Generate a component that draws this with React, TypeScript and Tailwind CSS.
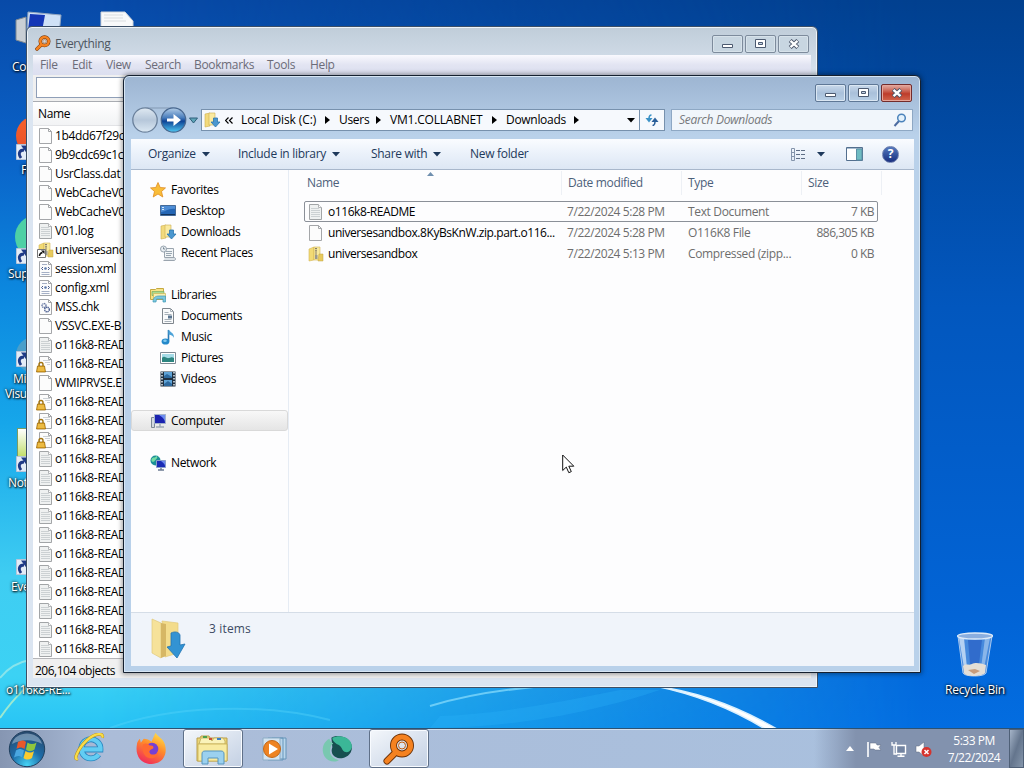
import type { ReactNode } from "react";
import clsx from "clsx";

type IconKind =
  | "blank"
  | "text"
  | "locked"
  | "zip"
  | "ziplink"
  | "xml"
  | "gear"
  | "star"
  | "desktop"
  | "downloads"
  | "recent"
  | "libraries"
  | "documents"
  | "music"
  | "pictures"
  | "videos"
  | "computer"
  | "network";

interface NavItem {
  label: string;
  icon: IconKind;
  child?: boolean;
  selected?: boolean;
}

const navGroups: NavItem[][] = [
  [
    { label: "Favorites", icon: "star" },
    { label: "Desktop", icon: "desktop", child: true },
    { label: "Downloads", icon: "downloads", child: true },
    { label: "Recent Places", icon: "recent", child: true },
  ],
  [
    { label: "Libraries", icon: "libraries" },
    { label: "Documents", icon: "documents", child: true },
    { label: "Music", icon: "music", child: true },
    { label: "Pictures", icon: "pictures", child: true },
    { label: "Videos", icon: "videos", child: true },
  ],
  [{ label: "Computer", icon: "computer", selected: true }],
  [{ label: "Network", icon: "network" }],
];

const files: { name: string; icon: IconKind; date: string; type: string; size: string }[] = [
  { name: "o116k8-README", icon: "text", date: "7/22/2024 5:28 PM", type: "Text Document", size: "7 KB" },
  {
    name: "universesandbox.8KyBsKnW.zip.part.o116...",
    icon: "blank",
    date: "7/22/2024 5:28 PM",
    type: "O116K8 File",
    size: "886,305 KB",
  },
  { name: "universesandbox", icon: "zip", date: "7/22/2024 5:13 PM", type: "Compressed (zipp...", size: "0 KB" },
];

const readme = "o116k8-READ";

const results: { name: string; icon: IconKind }[] = [
  { name: "1b4dd67f29c", icon: "blank" },
  { name: "9b9cdc69c1c", icon: "blank" },
  { name: "UsrClass.dat", icon: "blank" },
  { name: "WebCacheV0", icon: "blank" },
  { name: "WebCacheV0", icon: "blank" },
  { name: "V01.log", icon: "text" },
  { name: "universesand", icon: "ziplink" },
  { name: "session.xml", icon: "xml" },
  { name: "config.xml", icon: "xml" },
  { name: "MSS.chk", icon: "gear" },
  { name: "VSSVC.EXE-B", icon: "blank" },
  { name: readme, icon: "text" },
  { name: readme, icon: "locked" },
  { name: "WMIPRVSE.E", icon: "blank" },
  { name: readme, icon: "locked" },
  { name: readme, icon: "locked" },
  { name: readme, icon: "locked" },
  ...Array.from({ length: 11 }, () => ({ name: readme, icon: "text" as IconKind })),
];

function Page() {
  return (
    <path d="M1.5.5h9l3 3v12h-12z M10.5.5v3h3" fill="#fcfcfc" stroke="#a4a6a9" strokeWidth="1" strokeLinejoin="round" />
  );
}

function Zipper() {
  return (
    <>
      <path d="M1 3l5-2v13l-5 1z" fill="#f2da74" stroke="#d5b755" strokeWidth=".6" />
      <path d="M6 1h6v13H6z" fill="#f8ea9f" stroke="#d5b755" strokeWidth=".6" />
      <path d="M11 8h4v7h-5z" fill="#e8ca5d" stroke="#c3a445" strokeWidth=".5" />
      <path d="M8 2v10" stroke="#857c68" strokeWidth="2" strokeDasharray="1.2 1" />
      <path d="M7 9h2.500v4H7z" fill="#9a9890" />
    </>
  );
}

function FileIcon({ kind, className }: { kind: IconKind; className?: string }) {
  return (
    <svg viewBox="0 0 16 16" className={clsx("h-4 w-4 shrink-0 overflow-visible", className)} fill="none">
      {kind === "blank" && <Page />}
      {kind === "text" && (
        <>
          <path d="M1.500.500h9l3 3v12h-12z" fill="#eff1f1" stroke="#a2a5a7" />
          <path d="M3 4.500h8M3 6.500h9M3 8.500h9M3 10.500h9M3 12.500h9" stroke="#ccd1d3" />
          <path d="M10.500.500v3h3" fill="#fff" stroke="#b2b5b7" />
        </>
      )}
      {kind === "locked" && (
        <>
          <Page />
          <path d="M5 4.500h7M7 6.500h5M9 8.500h3" stroke="#ccd1d5" />
          <path d="M1 10.500V8.500a2 2 0 0 1 4 0v2" stroke="#a37510" strokeWidth="1.400" />
          <path d="M-.500 10h7l1 6h-9z" fill="#e5a823" stroke="#9b6a0d" strokeWidth=".8" />
          <path d="M0 12h6M-.500 14h7" stroke="#f7d874" strokeWidth=".8" />
        </>
      )}
      {kind === "zip" && <Zipper />}
      {kind === "ziplink" && (
        <>
          <Zipper />
          <path d="M-.5 7.500h8v8h-8z" fill="#fff" stroke="#777" />
          <path d="M1.500 14c0-2 .5-3 3-3.500" stroke="#111" strokeWidth="1.500" />
          <path d="M3 8.500h3.500V12z" fill="#111" />
        </>
      )}
      {kind === "xml" && (
        <>
          <Page />
          <path d="M4 3.500h5M3.500 11.500h8M3.500 13.500h8" stroke="#a5b0c6" />
          <path d="M5 6L3.500 7.500 5 9M10 6l1.500 1.500L10 9" stroke="#46598a" />
          <circle cx="7.500" cy="7.500" r="1.300" fill="#5b78a8" />
        </>
      )}
      {kind === "gear" && (
        <>
          <Page />
          <circle cx="6" cy="6.500" r="2" stroke="#6d7da5" strokeWidth="1.400" strokeDasharray="1.200 .5" />
          <circle cx="9" cy="10.500" r="2.300" stroke="#4b5e90" strokeWidth="1.500" strokeDasharray="1.200 .5" />
        </>
      )}
      {kind === "star" && (
        <path
          d="M8 .5l2.200 5 5.300.4-4 3.600 1.300 5.500L8 12l-4.800 3 1.300-5.500-4-3.600 5.300-.4z"
          fill="#f9bd39"
          stroke="#df8b21"
          strokeWidth=".8"
        />
      )}
      {kind === "desktop" && (
        <>
          <path d="M.5 2.500h15v10H.5z" fill="#2466b5" stroke="#456b99" />
          <path d="M1 3h14v3C9 5 5 9 1 9z" fill="#4e8dd6" />
          <path d="M2 4.500h2M2 6.500h2" stroke="#d5e7f8" />
          <path d="M1 11.500h14" stroke="#12345e" />
        </>
      )}
      {kind === "downloads" && (
        <>
          <path d="M1 2l5-1v13l-5 1z" fill="#f2da7d" stroke="#cfae50" strokeWidth=".6" />
          <path d="M5 1h6v12H5z" fill="#faeaa0" stroke="#cfae50" strokeWidth=".6" />
          <path d="M9.500 6h4v4h2.500L11.500 15 7 10h2.500z" fill="#4a97d0" stroke="#2c76ad" strokeWidth=".8" />
        </>
      )}
      {kind === "recent" && (
        <>
          <path d="M4.500 3.500h9v9h-9z" fill="#f2f5f7" stroke="#9aa4ae" />
          <path d="M3.500 15.500h10.500c2 0 2-3 0-3H5" fill="#dde3e8" stroke="#9aa4ae" />
          <path d="M6 6.500h6M6 8.500h6M6 10.500h5" stroke="#99a6b1" />
          <circle cx="3.500" cy="4" r="3" fill="#e9eef2" stroke="#98a4af" />
          <path d="M3.500 2.300V4h1.500" stroke="#60717f" strokeWidth=".8" />
        </>
      )}
      {kind === "libraries" && (
        <>
          <path d="M.5 2.500h5l1-1h7v11H.5z" fill="#f6e389" stroke="#c6a940" />
          <path d="M2 4.500h12v4H2z" fill="#a9d98f" stroke="#7aad62" strokeWidth=".7" />
          <path d="M3.500 6.500h12v5h-12z" fill="#f8eeb0" stroke="#cfb454" strokeWidth=".7" />
          <path d="M3 15c0-4 2-6 6-6h6.500v6H13v-3H6.500l-.5 3z" fill="#7cc7dc" stroke="#4099b8" strokeWidth=".7" />
        </>
      )}
      {kind === "documents" && (
        <>
          <path d="M2.500.5h8l3 3v12h-11z" fill="#fafbfc" stroke="#7f868d" />
          <path d="M10.500.5v3h3M4.500 4.500h4M4.500 6.500h7M4.500 11.500h7M4.500 13.500h7" stroke="#a8b1b9" />
          <path d="M8 7.500h4v3H8z" fill="#5a7590" />
        </>
      )}
      {kind === "music" && (
        <>
          <path d="M8.500 1v11" stroke="#2a79b5" strokeWidth="1.600" />
          <path d="M8.500 0c0 3 6 3 5.500 9-.5-2-2.500-3-5.500-3.500z" fill="#4da3d8" />
          <ellipse cx="5.500" cy="12.500" rx="3.900" ry="3.100" fill="#2489ca" />
          <ellipse cx="5" cy="11.800" rx="1.800" ry="1.200" fill="#80c8ee" />
        </>
      )}
      {kind === "pictures" && (
        <>
          <path d="M.5 2.500h15v11H.5z" fill="#fff" stroke="#7e8a94" />
          <path d="M2 4h12v8H2z" fill="#a5dbe7" />
          <path d="M2 8c3-3 4 1 7 0s3-1 5 0v4H2z" fill="#2d8580" />
        </>
      )}
      {kind === "videos" && (
        <>
          <path d="M.5.5h15v15H.5z" fill="#1f2f3f" />
          <path d="M4 1h8v6H4zM4 9h8v6H4z" fill="#5fa3d6" />
          <path d="M4 5l3-2 5 3v1H4zM4 13l4-3 4 3v2H4z" fill="#2d699e" />
          <path d="M2 1v14M14 1v14" stroke="#e5edf2" strokeWidth="1.500" strokeDasharray="1.500 1.500" />
        </>
      )}
      {kind === "computer" && (
        <>
          <path d="M1.500 4.500h3v10h-3z" fill="#d4dae1" stroke="#7d8995" />
          <path d="M4.500 1.500h11v9h-11z" fill="#1b23b0" stroke="#a3b2cb" />
          <path d="M9 2h6v8c0-4-3-6-6-8z" fill="#6d8df0" />
          <path d="M10 11v2.500M6 14h8" stroke="#9da9b7" strokeWidth="1.500" />
        </>
      )}
      {kind === "network" && (
        <>
          <circle cx="5.500" cy="5.500" r="5" fill="#1b8f96" />
          <path d="M1.500 4c2-3 3 0 5-3 2 1 0 3-1 4s-2 3-4 1z" fill="#74dba4" />
          <path d="M6.500 5.500h9v7h-9z" fill="#1a2bb5" stroke="#8b9fca" />
          <path d="M11 6h4v5c0-2-2-3-4-5z" fill="#6b88ee" />
          <path d="M11 13v1.500M8 15h6" stroke="#6c7b93" strokeWidth="1.400" />
        </>
      )}
    </svg>
  );
}

function Magnifier({ className }: { className?: string }) {
  return (
    <svg viewBox="0 0 32 32" className={className} fill="none">
      <path d="M12 20L4 28" stroke="#6b3208" strokeWidth="7" strokeLinecap="round" />
      <circle cx="19" cy="12.500" r="8.500" stroke="#6b3208" strokeWidth="7" />
      <path d="M12 20L4 28" stroke="#f58220" strokeWidth="5.200" strokeLinecap="round" />
      <circle cx="19" cy="12.500" r="8.500" stroke="#f58220" strokeWidth="5.200" />
      <circle cx="19" cy="12.500" r="3.500" stroke="#c25e10" strokeWidth="1" />
    </svg>
  );
}

function WindowButtons({ active }: { active?: boolean }) {
  const base = "flex h-[18px] items-center justify-center rounded-[2px] border";
  const plain = active
    ? "border-[#5f7896] bg-linear-to-b from-[#c9d9eb] via-[#a9c0da] to-[#b9d0e6] shadow-[inset_0_0_0_1px_#dbe7f3]"
    : "border-[#7d8b9c] bg-[#c8d6e1] shadow-[inset_0_0_0_1px_#d7e2ea]";
  return (
    <div className="flex gap-0.5">
      <div className={clsx(base, plain, "w-[31px]")}>
        <svg viewBox="0 0 12 10" className="h-2.5 w-3">
          <path d="M.5 5.500h10v3H.5z" fill="#fff" stroke="#4c5a70" />
        </svg>
      </div>
      <div className={clsx(base, plain, "w-[31px]")}>
        <svg viewBox="0 0 12 10" className="h-2.5 w-3">
          <path d="M.5.500h10v8H.5z" fill="#fff" stroke="#4c5a70" />
          <path d="M3.500 3.500h4v2h-4z" fill="#c5d4e6" stroke="#4c5a70" />
        </svg>
      </div>
      <div
        className={clsx(
          base,
          "w-[31px]",
          active
            ? "border-[#722c2c] bg-linear-to-b from-[#dc9a8f] from-10% via-[#bd3b2a] via-55% to-[#d2664e] shadow-[inset_0_0_0_1px_#e5a69b]"
            : plain,
        )}
      >
        <svg viewBox="0 0 12 10" className="h-2.5 w-3">
          <path d="M2.200 1.500l7.600 7M9.800 1.500l-7.600 7" stroke="#4c5568" strokeWidth="4.200" />
          <path d="M2.500 1.800l7 6.400M9.500 1.800l-7 6.400" stroke="#fff" strokeWidth="2.400" />
        </svg>
      </div>
    </div>
  );
}

function EverythingWindow() {
  return (
    <div className="absolute left-[26px] top-[26px] flex h-[662px] w-[792px] flex-col rounded-t-[6px] border border-[#3c4f66] bg-[#d9e4f0] bg-linear-to-b from-[#c0cdd9] to-[#dbe5f1] to-8% px-[6px] pb-[9px] shadow-[inset_0_0_0_1px_#eef4f9]">
      <div className="flex h-[28px] shrink-0 items-start pl-[2px] pr-[2px] pt-2">
        <Magnifier className="h-4 w-4" />
        <span className="ml-1 flex-1 leading-[18px] text-[#4d5660]">Everything</span>
        <WindowButtons />
      </div>
      <div className="flex h-5 shrink-0 items-center bg-linear-to-b from-[#f9f9fe] via-[#e2e4f2] to-[#dcdff0] pl-[7px] text-[#6c6c78]">
        <span className="w-8">File</span>
        <span className="w-[34px]">Edit</span>
        <span className="w-[39px]">View</span>
        <span className="w-[49px]">Search</span>
        <span className="w-[73px]">Bookmarks</span>
        <span className="w-[43px]">Tools</span>
        <span>Help</span>
      </div>
      <div className="flex min-h-0 flex-1 flex-col bg-[#f0f0f0]">
        <div className="h-[26px] shrink-0 px-[3px] pt-[2px]">
          <div className="h-[21px] border border-[#8f9fb8] bg-white" />
        </div>
        <div className="flex h-[25px] shrink-0 items-center border-b border-t border-b-[#e2e3e6] border-t-[#a9acb2] bg-linear-to-b from-white to-[#f2f3f5] pl-[5px] text-black">
          Name
        </div>
        <div className="flex-1 bg-white">
          {results.map((row, i) => (
            <div key={i} className="flex h-[19px] items-center whitespace-nowrap pl-[5px] text-black">
              <FileIcon kind={row.icon} />
              <span className="ml-px">{row.name}</span>
            </div>
          ))}
        </div>
        <div className="h-[21px] shrink-0 border-t border-[#b5b5b8] pl-0.5 pt-[3px] leading-[18px] tracking-[-0.5px] text-black">
          206,104 objects
        </div>
      </div>
    </div>
  );
}

function Chevron({ className }: { className?: string }) {
  return (
    <svg viewBox="0 0 8 5" className={clsx("h-[5px] w-2 shrink-0", className)}>
      <path d="M0 0h8L4 4.500z" fill="currentColor" />
    </svg>
  );
}

function Crumb({ label, className }: { label: string; className?: string }) {
  return (
    <span className={clsx("flex shrink-0 items-center justify-between whitespace-nowrap", className)}>
      {label}
      <svg viewBox="0 0 5 8" className="h-2 w-[5px]">
        <path d="M0 0l5 4-5 4z" fill="#000" />
      </svg>
    </span>
  );
}

function AddressRow() {
  return (
    <div className="flex h-[35px] shrink-0 items-start">
      <svg viewBox="0 0 70 32" className="h-8 w-[70px] shrink-0" fill="none">
        <defs>
          <linearGradient id="fwd" x1="0" y1="0" x2="0" y2="1">
            <stop offset="0" stopColor="#b5cfe8" />
            <stop offset=".4" stopColor="#4a7ebd" />
            <stop offset=".55" stopColor="#0e4496" />
            <stop offset="1" stopColor="#4fc9f3" />
          </linearGradient>
          <linearGradient id="back" x1="0" y1="0" x2="0" y2="1">
            <stop offset="0" stopColor="#dfe9f2" />
            <stop offset=".5" stopColor="#b6c7da" />
            <stop offset="1" stopColor="#dbe8f3" />
          </linearGradient>
        </defs>
        <path d="M14 4h28" stroke="#8399b3" />
        <circle cx="14" cy="16" r="12.200" fill="url(#back)" stroke="#6b819c" strokeWidth="1.300" />
        <circle cx="42.500" cy="16" r="12.200" fill="url(#fwd)" stroke="#48678f" strokeWidth="1.300" />
        <path d="M36 14.500h6.500v-4.500l7.500 6-7.500 6v-4.500H36z" fill="#fff" />
        <path d="M58.500 14h8l-4 5z" fill="#5ea5b8" stroke="#2e5f7a" />
      </svg>
      <div className="mt-[5px] flex h-[22px] w-[464px] border border-[#7791ad] bg-[#f6f9fd] text-black">
        <div className="flex flex-1 items-center pl-0.5">
          <FileIcon kind="downloads" />
          <svg viewBox="0 0 8 7" className="ml-[5px] h-[7px] w-2" fill="none">
            <path d="M3.500.5l-3 3 3 3M7.500.5l-3 3 3 3" stroke="#000" strokeWidth="1.200" />
          </svg>
          <Crumb label="Local Disk (C:)" className="ml-2 w-[89px] tracking-[-0.1px]" />
          <Crumb label="Users" className="ml-[9px] w-[42px] tracking-[-0.3px]" />
          <Crumb label="VM1.COLLABNET" className="ml-[9px] w-[107px] tracking-[-0.2px]" />
          <Crumb label="Downloads" className="ml-[9px] w-[73px] tracking-[-0.3px]" />
          <Chevron className="ml-auto mr-1" />
        </div>
        <div className="flex w-[25px] items-center justify-center border-l border-[#7791ad]">
          <svg viewBox="0 0 14 12" className="h-3 w-3.5" fill="none">
            <path d="M6.500 1C4.500 1 4 2 4 5" stroke="#3b92c6" strokeWidth="1.600" />
            <path d="M.5 4h7L4 8.500z" fill="#3b92c6" />
            <path d="M7.500 11.500c2 0 2.500-1 2.500-4" stroke="#2a5f9a" strokeWidth="1.600" />
            <path d="M6.500 8h7L10 3.500z" fill="#2a5f9a" />
          </svg>
        </div>
      </div>
      <div className="ml-1.5 mt-[5px] flex h-[22px] w-[242px] items-center justify-between border border-[#8ea8c4] bg-[#f1f6fb] pl-[7px] pr-[5px] italic tracking-[-0.3px] text-[#77797c]">
        Search Downloads
        <svg viewBox="0 0 14 14" className="h-3.5 w-3.5" fill="none">
          <path d="M6 8l-4.500 5" stroke="#4c6ba0" strokeWidth="2" />
          <circle cx="8.500" cy="5" r="3.800" fill="#e3f1fb" stroke="#4b83bb" strokeWidth="1.500" />
        </svg>
      </div>
    </div>
  );
}

function Toolbar() {
  return (
    <div className="flex h-[31px] shrink-0 items-center border-b border-[#a8b7cb] bg-linear-to-b from-[#fafcff] via-[#eaf1fa] to-[#dde7f4] pl-[17px] tracking-[-0.3px] text-[#1e395b]">
      <span className="flex w-[90px] items-center gap-1.5">
        Organize <Chevron />
      </span>
      <span className="flex w-[133px] items-center gap-1.5">
        Include in library <Chevron />
      </span>
      <span className="flex w-[99px] items-center gap-1.5">
        Share with <Chevron />
      </span>
      <span>New folder</span>
      <div className="ml-auto flex items-center pr-[15px]">
        <svg viewBox="0 0 15 13" className="h-[13px] w-[15px]" fill="none">
          <path d="M.5.5h3v12h-3zM.5 4.500h3M.5 8.500h3" stroke="#8494ab" />
          <path d="M5 2.500h10M5 6.500h10M5 10.500h10" stroke="#5e6e86" strokeDasharray="4 1" />
        </svg>
        <Chevron className="ml-[11px]" />
        <svg viewBox="0 0 17 14" className="ml-[21px] h-3.5 w-[17px]" fill="none">
          <path d="M.5.5h16v13H.5z" fill="#fff" stroke="#536f8e" />
          <path d="M1 1.500h15" stroke="#a9bdd1" />
          <path d="M10.500 2h5.500v11h-5.500z" fill="#6fbcc2" stroke="#5b8fa5" />
        </svg>
        <div className="ml-[19px] flex h-[17px] w-[17px] items-center justify-center rounded-full border border-[#6d7fae] bg-linear-to-b from-[#5478bd] to-[#1a2f80] text-[12px] font-bold leading-none text-white">
          ?
        </div>
      </div>
    </div>
  );
}

function NavPane() {
  return (
    <div className="flex w-[158px] shrink-0 flex-col gap-[21px] border-r border-[#e6ecf4] pt-[9px] text-black">
      {navGroups.map((group) => (
        <div key={group[0].label}>
          {group.map((item) => (
            <div
              key={item.label}
              className={clsx(
                "flex h-[21px] items-center border",
                item.child ? "pl-[28px]" : "pl-[18px]",
                item.selected
                  ? "rounded-[3px] border-[#d9d9d9] bg-linear-to-b from-[#f8f8f8] to-[#e5e5e5]"
                  : "border-transparent",
              )}
            >
              <FileIcon kind={item.icon} />
              <span className="ml-[5px]">{item.label}</span>
            </div>
          ))}
        </div>
      ))}
    </div>
  );
}

function FilePane() {
  return (
    <div className="relative flex-1 pl-[15px] pt-px">
      <svg viewBox="0 0 7 4" className="absolute left-[138px] top-0.5 h-1 w-[7px]">
        <path d="M0 4l3.500-4L7 4z" fill="#6f8fae" />
      </svg>
      <div className="flex h-6 text-[#4c607a]">
        <span className="flex w-[258px] items-center border-r border-[#edf0f5] pl-[3px]">Name</span>
        <span className="flex w-[120px] items-center border-r border-[#edf0f5] pl-1.5">Date modified</span>
        <span className="flex w-[120px] items-center border-r border-[#edf0f5] pl-1.5">Type</span>
        <span className="flex w-[80px] items-center border-r border-[#edf0f5] pl-1.5">Size</span>
      </div>
      <div className="mt-1.5 w-[574px]">
        {files.map((file, i) => (
          <div
            key={file.name}
            className={clsx(
              "flex h-[21px] items-center whitespace-nowrap rounded-[2px] border text-[#6d6d6d]",
              i === 0 ? "border-[#8b9098]" : "border-transparent",
            )}
          >
            <FileIcon kind={file.icon} className="ml-[3px]" />
            <span className="ml-1 w-[239px] tracking-[-0.43px] text-black">{file.name}</span>
            <span className="w-[121px] tracking-[-0.42px]">{file.date}</span>
            <span className="w-[120px]">{file.type}</span>
            <span className="flex-1 pr-[3px] text-right tracking-[-0.5px]">{file.size}</span>
          </div>
        ))}
      </div>
    </div>
  );
}

function ExplorerWindow() {
  return (
    <div className="absolute left-[123px] top-[75px] flex h-[598px] w-[798px] flex-col rounded-t-[6px] border border-[#15202f] bg-[#b9d1ea] bg-linear-to-b from-[#9db5d2] to-[#b9d1ea] to-10% pb-[6px] pl-[7px] pr-[6px] shadow-[inset_0_0_0_1px_#d7e6f4,0_0_5px_1px_#0006]">
      <div className="flex h-7 shrink-0 justify-end pr-[2px] pt-2">
        <WindowButtons active />
      </div>
      <AddressRow />
      <div className="flex min-h-0 flex-1 flex-col bg-[#fdfdfe]">
        <Toolbar />
        <div className="flex min-h-0 flex-1">
          <NavPane />
          <FilePane />
        </div>
        <div className="flex h-[54px] shrink-0 border-t border-[#d5dde7] bg-[#f0f4fa] pl-[19px] pt-[5px]">
          <svg viewBox="0 0 36 42" className="h-[42px] w-9" fill="none">
            <path d="M12 3l16 2v30l-13 4z" fill="#f3dc8c" stroke="#e2ca7d" strokeWidth=".7" />
            <path d="M2 1l9 4v35l-9-5z" fill="#f6e29a" stroke="#e0c97c" strokeWidth=".7" />
            <path d="M11 5l5 1v32l-5 2z" fill="#d6b765" />
            <path d="M21 15c4-2 8-1 9 2v10l5-1-8 14-10-11 4-1z" fill="#3393d3" stroke="#2274b2" strokeWidth=".8" />
          </svg>
          <span className="ml-[23px] pt-0.5 tracking-[0.15px] text-[#3c4a63]">3 items</span>
        </div>
      </div>
    </div>
  );
}

function ShortcutArrow({ className }: { className?: string }) {
  return (
    <svg viewBox="0 0 16 16" className={clsx("h-4 w-4", className)} fill="none">
      <path d="M.5.500h15v15H.5z" fill="#e3ecf7" stroke="#b7c5d9" />
      <path d="M5 14C2 10 3 6 8 6" stroke="#1e3a86" strokeWidth="2.800" />
      <path d="M5 1.500h6v8z" fill="#1e3a86" />
    </svg>
  );
}

function DesktopLabel({ children, className }: { children: ReactNode; className?: string }) {
  return (
    <span
      className={clsx(
        "absolute whitespace-nowrap leading-[15px] text-white [text-shadow:1px_1px_2px_#000,0_0_3px_#000]",
        className,
      )}
    >
      {children}
    </span>
  );
}

function DesktopIcons() {
  return (
    <div className="absolute inset-0">
      <svg viewBox="0 0 48 34" className="absolute left-[15px] top-[10px] h-[34px] w-12" fill="none">
        <path d="M1 10l10-3v26l-10-3z" fill="#c9cfd5" stroke="#7f8992" />
        <path d="M13 2l33 3-2 20-32-3z" fill="#cfe1f6" stroke="#91a5bf" />
        <path d="M15 4l15 1-3 16-14-1z" fill="#1437b6" />
      </svg>
      <svg viewBox="0 0 34 18" className="absolute left-[100px] top-[11px] h-[18px] w-[34px]" fill="none">
        <path d="M1 1h24l8 9v8H1z" fill="#f8f9fa" stroke="#cfd5db" />
        <path d="M4 4h19M4 7h19M4 10h22" stroke="#d9dde0" />
      </svg>
      <div className="absolute left-4 top-[116px] h-10 w-10 rounded-full bg-linear-to-b from-[#f5612b] to-[#e8502a]" />
      <div className="absolute left-[15px] top-[215px] h-11 w-11 rounded-full bg-[#4ed0a5]" />
      <div className="absolute left-4 top-[337px] h-9 w-9 rounded-full bg-[#4a9fcb]" />
      <div className="absolute left-[17px] top-[428px] h-9 w-8 border border-[#7b9c62] bg-linear-to-b from-white to-[#b5d52a]" />
      <ShortcutArrow className="absolute left-4 top-[144px]" />
      <ShortcutArrow className="absolute left-4 top-[248px]" />
      <ShortcutArrow className="absolute left-4 top-[351px]" />
      <ShortcutArrow className="absolute left-4 top-[456px]" />
      <ShortcutArrow className="absolute left-4 top-[559px]" />
      <DesktopLabel className="left-3 top-[59px]">Co</DesktopLabel>
      <DesktopLabel className="left-[21px] top-[162px]">F</DesktopLabel>
      <DesktopLabel className="left-2 top-[266px]">Sup</DesktopLabel>
      <DesktopLabel className="left-[13px] top-[371px]">Mi</DesktopLabel>
      <DesktopLabel className="left-[5px] top-[386px]">Visu</DesktopLabel>
      <DesktopLabel className="left-2 top-[475px]">Not</DesktopLabel>
      <DesktopLabel className="left-[11px] top-[579px]">Eve</DesktopLabel>
      <DesktopLabel className="left-1.5 top-[682px]">o116k8-RE...</DesktopLabel>
      <svg viewBox="0 0 38 46" className="absolute left-[956px] top-[632px] h-[46px] w-[38px]" fill="none">
        <path d="M2 4l5 37c1 4 22 4 23 0l6-37z" fill="#5e95de" fillOpacity=".75" stroke="#a9c9f0" />
        <path d="M3 6l5 30h3L8 6z" fill="#cfe2f7" fillOpacity=".8" />
        <path d="M29 6l-4 30h3l6-30z" fill="#b5d2f2" fillOpacity=".6" />
        <path d="M12 8l2 24h9l3-24z" fill="#285fc4" fillOpacity=".7" />
        <path d="M7 34c3-3 6 0 9-2s9-1 14 1l-1 8c-3 4-20 4-21 0z" fill="#e4ded6" />
        <path d="M12 38l7-1 5 2-6 3z" fill="#c79c7c" />
        <ellipse cx="19" cy="4" rx="17.500" ry="3" fill="#8aaedf" stroke="#dbe9f8" strokeWidth="1.300" />
      </svg>
      <DesktopLabel className="left-[945px] top-[682px] tracking-[-0.25px]">Recycle Bin</DesktopLabel>
    </div>
  );
}

function Wallpaper() {
  return (
    <svg viewBox="0 0 1024 768" className="absolute inset-0 h-full w-full" preserveAspectRatio="none" fill="none">
      <defs>
        <linearGradient id="sky" x1="0" y1="0" x2="0" y2="1">
          <stop offset="0" stopColor="#084aa8" />
          <stop offset=".2" stopColor="#0a62c8" />
          <stop offset=".38" stopColor="#0c88df" />
          <stop offset=".55" stopColor="#16a6ea" />
          <stop offset=".75" stopColor="#3fcdf2" />
          <stop offset=".88" stopColor="#3cd2f4" />
          <stop offset="1" stopColor="#18baf6" />
        </linearGradient>
        <linearGradient id="right" x1="0" y1="0" x2="0" y2="1">
          <stop offset="0" stopColor="#01408f" />
          <stop offset=".4" stopColor="#0257be" />
          <stop offset=".8" stopColor="#0264d6" />
          <stop offset="1" stopColor="#0370e4" />
        </linearGradient>
        <linearGradient id="fade" x1="0" y1="0" x2="1" y2="0">
          <stop offset=".1" stopColor="#000" />
          <stop offset=".9" stopColor="#fff" />
        </linearGradient>
        <mask id="side">
          <path d="M0 0h1024v768H0z" fill="url(#fade)" />
        </mask>
      </defs>
      <path d="M0 0h1024v768H0z" fill="url(#sky)" />
      <path d="M0 0h1024v768H0z" fill="url(#right)" mask="url(#side)" />
      <path d="M0 678C8 668 18 662 30 660" stroke="#9be8e8" strokeWidth="2" opacity=".8" />
      <path d="M0 718C12 700 30 682 50 670" stroke="#b8f0c8" strokeWidth="2" opacity=".8" />
      <path d="M110 728C170 706 260 702 330 720" stroke="#58d4fa" strokeWidth="2" opacity=".4" />
      <path d="M430 706C470 694 510 688 560 685" stroke="#7fd7fa" strokeWidth="2" opacity=".8" />
      <path d="M440 716C500 714 560 702 620 690l40 0C600 710 520 728 430 728z" fill="#30b6fa" opacity=".25" />
      <path d="M655 686C700 692 742 708 782 732l-12 0C735 710 695 694 655 686z" fill="#fff" stroke="#d9f0ff" strokeWidth="1.500" />
    </svg>
  );
}

function TaskButton({ open, children }: { open?: boolean; children: ReactNode }) {
  return (
    <div
      className={clsx(
        "flex h-[39px] w-[60px] items-center justify-center rounded-[3px] border",
        open
          ? "border-[#5f7088] bg-linear-to-br from-[#f4f7fb] to-[#c3d0e3] shadow-[inset_0_0_0_1px_#f8fbff]"
          : "border-transparent",
      )}
    >
      {children}
    </div>
  );
}

function Taskbar() {
  return (
    <div className="absolute bottom-0 left-0 flex h-10 w-full border-t border-[#2d5272] bg-linear-to-r from-[#8696b2] via-[#abbcd8] via-10% to-[#a9c1df] shadow-[inset_0_1px_0_#d2e0ef]">
      <div className="flex w-[59px] shrink-0 items-center pl-2">
        <svg viewBox="0 0 38 38" className="h-[38px] w-[38px]">
          <defs>
            <radialGradient id="orb" cx=".5" cy=".95" r=".9">
              <stop offset="0" stopColor="#45d3f5" />
              <stop offset=".5" stopColor="#1d6ca8" />
              <stop offset="1" stopColor="#274b70" />
            </radialGradient>
          </defs>
          <circle cx="19" cy="19" r="17.700" fill="url(#orb)" stroke="#20405f" />
          <path d="M4 14C7 0 31 0 34 14 25 9 14 9 4 14z" fill="#a9c3d9" opacity=".55" />
          <path d="M10 12c3-2 6-2 8 0l-1.500 7c-3-2-5-2-8 0z" fill="#e8582a" />
          <path d="M19.500 12.500c3 2 6 2 9 0l-2 7c-3 2-6 2-8.500 0z" fill="#8fc63d" />
          <path d="M8 20.500c3-2 5-2 8 0l-2 7c-2-2-5-2-8 0z" fill="#4aa7e0" />
          <path d="M17.500 21c3 2 6 2 8.500 0l-2 7c-3 2-6 2-8.500 0z" fill="#fbcb2e" />
        </svg>
      </div>
      <div className="flex gap-0.5">
        <TaskButton>
          <svg viewBox="0 0 34 34" className="h-[31px] w-[31px]" fill="none">
            <path d="M27 23.500a10.500 10.500 0 1 1 2-5.500H10" stroke="#2a86bf" strokeWidth="6.500" />
            <path d="M27 23.500a10.500 10.500 0 1 1 2-5.500H10" stroke="#62cdf3" strokeWidth="4.800" />
            <path d="M4 28C-1 31 4 17 14 8S33 0 31 5" stroke="#b88a15" strokeWidth="3.500" />
            <path d="M4 28C-1 31 4 17 14 8S33 0 31 5" stroke="#f8dc48" strokeWidth="2.500" />
          </svg>
        </TaskButton>
        <TaskButton>
          <svg viewBox="0 0 34 34" className="h-[33px] w-[33px]">
            <defs>
              <linearGradient id="fox" x1=".8" y1="0" x2=".3" y2="1">
                <stop offset="0" stopColor="#ffe24a" />
                <stop offset=".45" stopColor="#ff8a2b" />
                <stop offset="1" stopColor="#f02a5c" />
              </linearGradient>
            </defs>
            <path
              d="M21 1c2 3 6 5 8 8 5 8 4 23-12 24C5 33 0 23 2 13c0-2 1-4 3-6l1 4 3-4c3 0 6 1 8 3z"
              fill="url(#fox)"
            />
            <circle cx="17.500" cy="17.500" r="6.500" fill="#7540d5" />
            <path d="M8 13c3-2 6-1 7 1 2 0 4 0 4 2s-5 2-4 5 6 3 9 0c-1 6-8 8-13 4-3-3-4-8-3-12z" fill="#ff6a32" />
          </svg>
        </TaskButton>
        <TaskButton open>
          <svg viewBox="0 0 36 32" className="h-8 w-9" fill="none">
            <path d="M2 28V5h3l1-2h8l1 2h17v23z" fill="#ecd679" stroke="#b99f4d" />
            <path d="M5 8l1-3h9l2 3 2-3h9l2 3v3H4z" fill="#faf3ba" stroke="#bda95a" strokeWidth=".8" />
            <path d="M8 4h4" stroke="#4b9f4c" strokeWidth="2" />
            <path d="M14 6h3" stroke="#c84d35" strokeWidth="2" />
            <path d="M22 6h4" stroke="#3e7fc5" strokeWidth="2" />
            <path d="M3 11h29v17H3z" fill="#f8eba0" stroke="#c7ad52" strokeWidth=".8" />
            <path d="M7 31V21c0-2 1-3 3-3h16c2 0 3 1 3 3v10h-6v-6H13v6z" fill="#9bd1ef" stroke="#5695bf" />
          </svg>
        </TaskButton>
        <TaskButton>
          <svg viewBox="0 0 28 28" className="h-7 w-7" fill="none">
            <path d="M11 3h14v21H11zM7 3h15v22H7z" fill="#b9d6ec" stroke="#6795b9" />
            <path d="M2 3h17v22H2z" fill="#d3e4f1" stroke="#8dadc6" />
            <circle cx="11" cy="14" r="8.500" fill="#ee8322" stroke="#c36819" />
            <path d="M8 8.500l9 5.500-9 5.500z" fill="#fff" />
          </svg>
        </TaskButton>
        <TaskButton>
          <svg viewBox="0 0 34 30" className="h-[28px] w-[32px]">
            <path d="M11 3C16-1 32 1 33 13c0 8-7 12-13 12C12 24 10 18 12 13z" fill="#174f50" />
            <path d="M9 4C0 8-1 22 8 27c4 2 8 2 11 0-7-2-11-7-9-12 0-3 1-5 3-6-2-1-4-3-4-5z" fill="#79c8b0" />
            <path d="M12 3C20-1 33 2 33 13c-2 6-7 7-10 3-2-4-3-5-6-6-3-2-5-4-5-7z" fill="#3bb797" />
          </svg>
        </TaskButton>
        <TaskButton open>
          <Magnifier className="h-8 w-8" />
        </TaskButton>
      </div>
      <div className="ml-auto flex w-[210px] items-center bg-linear-to-r from-transparent to-[#8292ae] to-20% pl-[32px]">
        <svg viewBox="0 0 8 5" className="h-[5px] w-2">
          <path d="M4 0l4 5H0z" fill="#fff" />
        </svg>
        <svg viewBox="0 0 16 16" className="ml-3 h-4 w-4" fill="none">
          <path d="M2 1v15" stroke="#fff" strokeWidth="1.600" />
          <path d="M4 2h6l1 2h4l-2 2.500 2 2.500h-6L8 8H4z" fill="#fff" stroke="#5c6a80" strokeWidth=".5" />
        </svg>
        <svg viewBox="0 0 16 16" className="ml-[9px] h-4 w-4" fill="none">
          <path d="M5.500 4.500h9v8h-9z" fill="#7384a1" stroke="#fff" strokeWidth="1.400" />
          <path d="M10 13v2M6.500 15.200h7" stroke="#fff" strokeWidth="1.400" />
          <path d="M1 1v3h4V1M3 4v9h3" stroke="#fff" strokeWidth="1.300" />
        </svg>
        <svg viewBox="0 0 17 16" className="ml-2 h-4 w-[17px]" fill="none">
          <path d="M1 5h3l5-4v14l-5-4H1z" fill="#fff" stroke="#5e6a7d" strokeWidth=".5" />
          <circle cx="11.500" cy="11" r="5" fill="#d5332d" />
          <path d="M9.500 9l4 4M13.500 9l-4 4" stroke="#fff" strokeWidth="1.500" />
        </svg>
        <div className="ml-[9px] w-[66px] text-center leading-[17px] tracking-[-0.5px] text-white">
          <div>5:33 PM</div>
          <div>7/22/2024</div>
        </div>
        <div className="ml-auto h-full w-[15px] border border-[#4f6077] bg-linear-to-br from-[#a5b4c8] via-[#64758d] to-[#8596ab]" />
      </div>
    </div>
  );
}

export default function App() {
  return (
    <div className="relative h-[768px] w-[1024px] cursor-default select-none overflow-hidden font-['Open_Sans','Noto_Sans',sans-serif] text-[12px] leading-[18px] tracking-[-0.35px]">
      <Wallpaper />
      <DesktopIcons />
      <EverythingWindow />
      <ExplorerWindow />
      <Taskbar />
      <svg viewBox="0 0 14 20" className="absolute left-[562px] top-[454px] h-5 w-3.5" fill="none">
        <path
          d="M.7 1v15.500l3.600-3.400 2.500 5.600 2.500-1.100-2.500-5.400h5z"
          fill="#fff"
          stroke="#111"
          strokeLinejoin="round"
        />
      </svg>
    </div>
  );
}
